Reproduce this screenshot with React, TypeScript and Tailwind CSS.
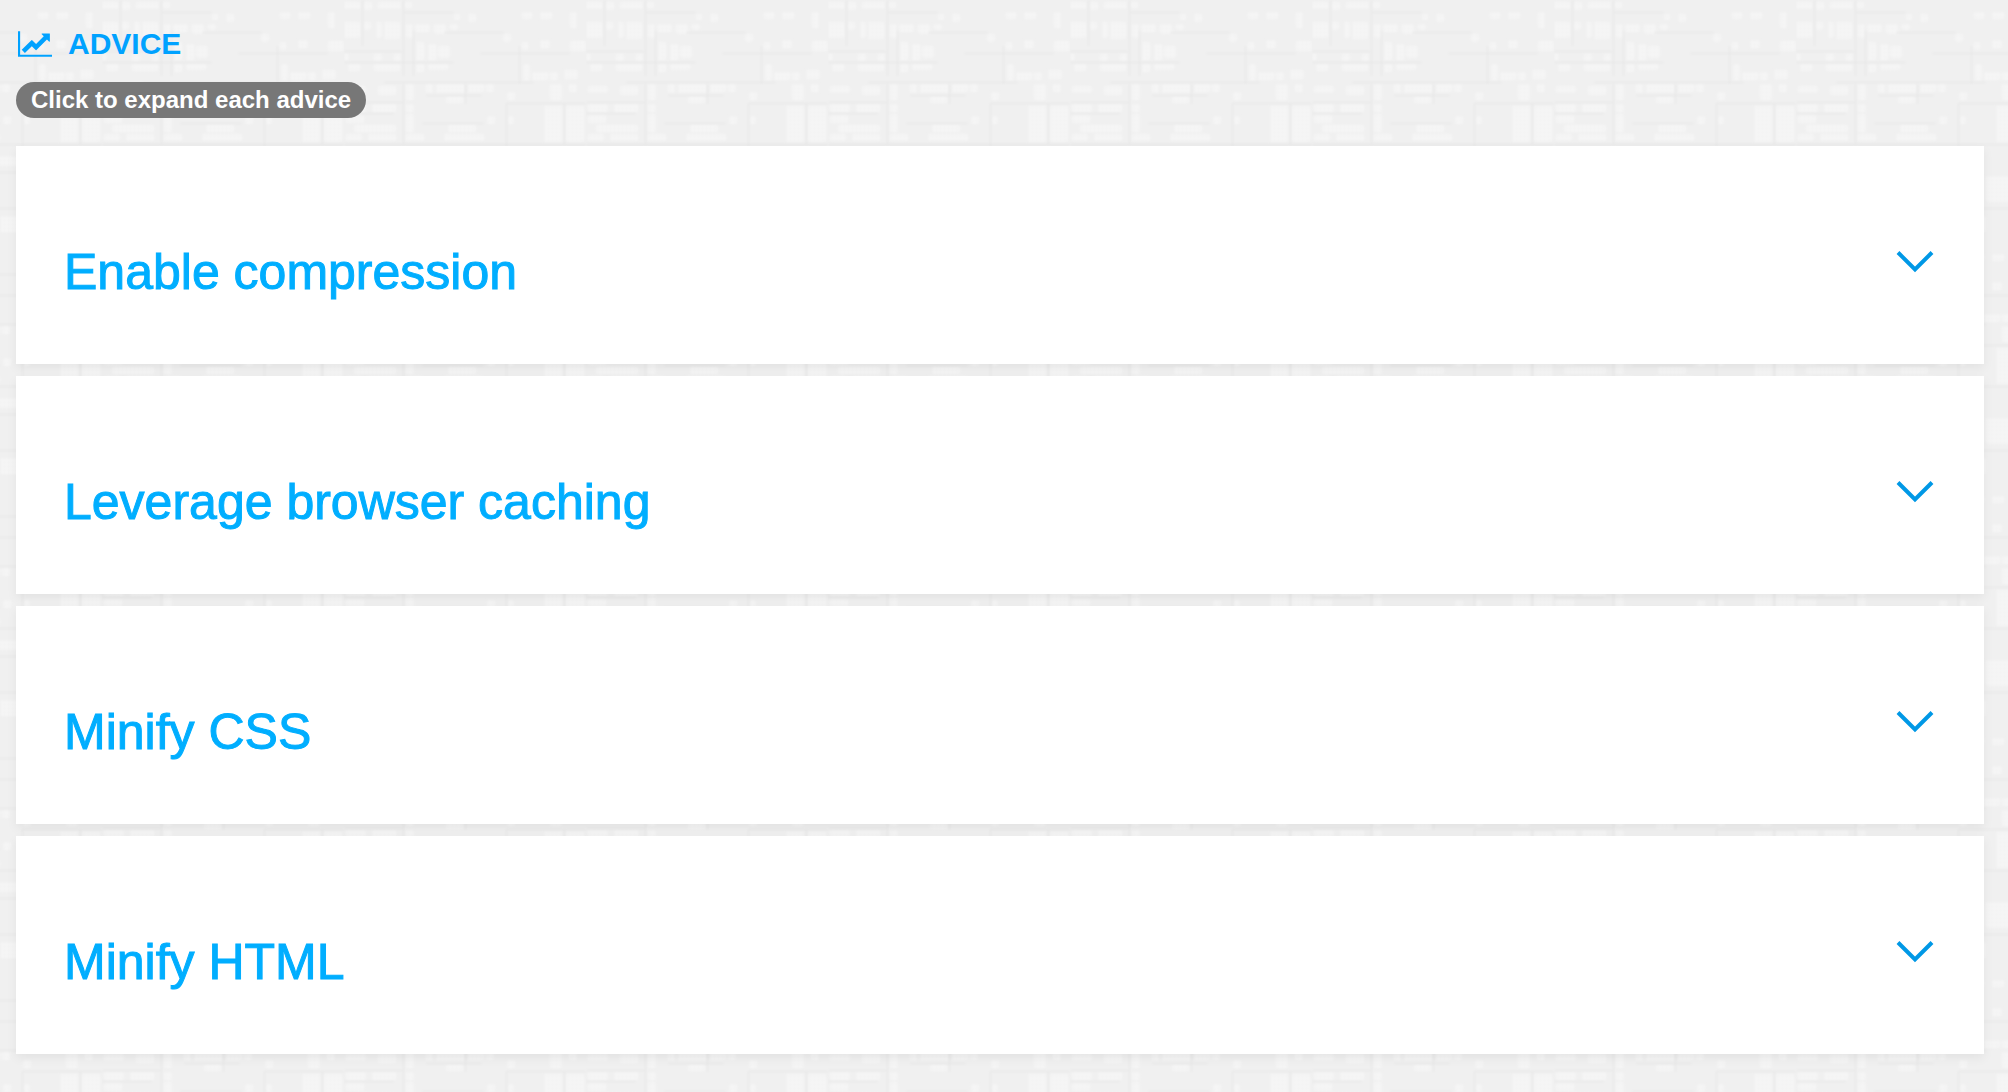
import { useState } from 'react'

interface Advice {
  id: string
  title: string
  text: string
}

interface Patch {
  x: number
  y: number
  w: number
  h: number
}

const advices: Advice[] = [
  {
    id: 'compression',
    title: 'Enable compression',
    text: 'Compress resources with gzip or deflate to reduce the number of bytes sent over the network.',
  },
  {
    id: 'caching',
    title: 'Leverage browser caching',
    text: 'Set an expiry date in the HTTP headers so the browser can load static resources from disk.',
  },
  {
    id: 'css',
    title: 'Minify CSS',
    text: 'Compact the CSS code to save bytes and speed up download and parse times.',
  },
  {
    id: 'html',
    title: 'Minify HTML',
    text: 'Compact the HTML code, including inline scripts and styles, to speed up download and parse times.',
  },
]

// light woven patches of the linen tile
const patches: Patch[] = [
  { x: 0, y: 2, w: 16, h: 7 },
  { x: 20, y: 2, w: 8, h: 8 },
  { x: 34, y: 2, w: 23, h: 7 },
  { x: 61, y: 2, w: 7, h: 6 },
  { x: 0, y: 22, w: 16, h: 16 },
  { x: 20, y: 22, w: 7, h: 8 },
  { x: 32, y: 22, w: 6, h: 16 },
  { x: 40, y: 22, w: 16, h: 17 },
  { x: 62, y: 24, w: 7, h: 14 },
  { x: 71, y: 24, w: 15, h: 8 },
  { x: 90, y: 24, w: 12, h: 10 },
  { x: 106, y: 24, w: 8, h: 6 },
  { x: 72, y: 42, w: 8, h: 18 },
  { x: 84, y: 44, w: 8, h: 16 },
  { x: 94, y: 46, w: 12, h: 12 },
  { x: 110, y: 14, w: 6, h: 6 },
  { x: 124, y: 14, w: 8, h: 8 },
  { x: 0, y: 54, w: 5, h: 6 },
  { x: 30, y: 54, w: 8, h: 7 },
  { x: 50, y: 54, w: 7, h: 7 },
  { x: 4, y: 64, w: 12, h: 7 },
  { x: 30, y: 64, w: 26, h: 7 },
  { x: 72, y: 64, w: 8, h: 8 },
  { x: 84, y: 64, w: 20, h: 6 },
  { x: 178, y: 12, w: 10, h: 7 },
  { x: 196, y: 12, w: 12, h: 7 },
  { x: 226, y: 12, w: 7, h: 16 },
  { x: 159, y: 34, w: 8, h: 8 },
  { x: 178, y: 42, w: 6, h: 8 },
  { x: 196, y: 40, w: 10, h: 8 },
  { x: 226, y: 41, w: 16, h: 10 },
  { x: 179, y: 64, w: 7, h: 16 },
  { x: 188, y: 72, w: 16, h: 8 },
  { x: 206, y: 72, w: 8, h: 8 },
  { x: 220, y: 70, w: 14, h: 9 },
  { x: 2, y: 86, w: 20, h: 7 },
  { x: 34, y: 86, w: 18, h: 9 },
  { x: 62, y: 84, w: 8, h: 16 },
  { x: 62, y: 104, w: 8, h: 8 },
  { x: 62, y: 114, w: 8, h: 18 },
  { x: 82, y: 84, w: 7, h: 9 },
  { x: 92, y: 84, w: 28, h: 9 },
  { x: 124, y: 84, w: 16, h: 8 },
  { x: 142, y: 84, w: 8, h: 8 },
  { x: 102, y: 97, w: 17, h: 6 },
  { x: 163, y: 92, w: 8, h: 8 },
  { x: 206, y: 84, w: 12, h: 16 },
  { x: 225, y: 84, w: 8, h: 8 },
  { x: 2, y: 104, w: 20, h: 8 },
  { x: 28, y: 104, w: 24, h: 8 },
  { x: 143, y: 116, w: 8, h: 8 },
  { x: 164, y: 116, w: 6, h: 8 },
  { x: 200, y: 106, w: 18, h: 36 },
  { x: 222, y: 106, w: 18, h: 36 },
  { x: 2, y: 115, w: 18, h: 8 },
  { x: 10, y: 125, w: 42, h: 7 },
  { x: 104, y: 125, w: 28, h: 7 },
  { x: 2, y: 134, w: 16, h: 7 },
  { x: 24, y: 134, w: 28, h: 7 },
  { x: 62, y: 134, w: 18, h: 7 },
  { x: 100, y: 134, w: 40, h: 7 },
  { x: 20, y: 150, w: 34, h: 14 },
  { x: 110, y: 156, w: 70, h: 10 },
  { x: 6, y: 184, w: 20, h: 30 },
  { x: 84, y: 190, w: 50, h: 14 },
  { x: 190, y: 176, w: 40, h: 26 },
  { x: 40, y: 222, w: 60, h: 12 },
  { x: 140, y: 216, w: 50, h: 16 },
]

// darker threads, thin rows and columns
const threads: Patch[] = [
  { x: 60, y: 12, w: 50, h: 1 },
  { x: 100, y: 32, w: 60, h: 1 },
  { x: 0, y: 51, w: 58, h: 1 },
  { x: 136, y: 53, w: 90, h: 1 },
  { x: 0, y: 62, w: 110, h: 1 },
  { x: 40, y: 82, w: 150, h: 1 },
  { x: 82, y: 95, w: 56, h: 1 },
  { x: 0, y: 102, w: 60, h: 1 },
  { x: 162, y: 103, w: 80, h: 1 },
  { x: 0, y: 113, w: 50, h: 1 },
  { x: 78, y: 123, w: 62, h: 1 },
  { x: 0, y: 144, w: 242, h: 1 },
  { x: 0, y: 172, w: 180, h: 1 },
  { x: 60, y: 208, w: 182, h: 1 },
  { x: 18, y: 0, w: 1, h: 46 },
  { x: 59, y: 0, w: 1, h: 76 },
  { x: 69, y: 30, w: 1, h: 46 },
  { x: 175, y: 46, w: 1, h: 38 },
  { x: 220, y: 104, w: 1, h: 40 },
  { x: 59, y: 84, w: 1, h: 60 },
  { x: 121, y: 84, w: 1, h: 20 },
  { x: 162, y: 104, w: 1, h: 80 },
]

function LinenBackground() {
  return (
    <svg className="absolute inset-0 -z-10 h-full w-full" aria-hidden="true">
      <defs>
        <filter id="soften" x="0" y="0" width="1" height="1">
          <feGaussianBlur stdDeviation="1" />
        </filter>
        <pattern id="weave" width="4" height="4" patternUnits="userSpaceOnUse">
          <rect width="4" height="4" fill="#f7f7f7" />
          <rect width="1" height="4" fill="#f2f2f2" />
          <rect width="4" height="1" fill="#f2f2f2" />
        </pattern>
        <pattern id="linen" x="102" width="242" height="242" patternUnits="userSpaceOnUse">
          <rect width="242" height="242" fill="#f0f0f0" />
          <g filter="url(#soften)">
            {patches.map((p, i) => (
              <rect key={i} x={p.x} y={p.y} width={p.w} height={p.h} rx="2" fill="url(#weave)" />
            ))}
            {threads.map((t, i) => (
              <rect key={i} x={t.x} y={t.y} width={t.w} height={t.h} fill="#e6e6e6" />
            ))}
          </g>
        </pattern>
      </defs>
      <rect width="100%" height="100%" fill="url(#linen)" />
    </svg>
  )
}

function LineChartIcon() {
  return (
    <svg className="h-[30px] w-[34px]" viewBox="0 0 2048 1792" fill="currentColor" aria-hidden="true">
      <path d="M2048 1536v128h-2048v-1536h128v1408h1920zm-128-1248v435q0 21-19.5 29.5t-35.5-7.5l-121-121-633 633q-10 10-23 10t-23-10l-233-233-416 416-192-192 585-585q10-10 23-10t23 10l233 233 464-464-121-121q-16-16-7.5-35.5t29.5-19.5h435q14 0 23 9t9 23z" />
    </svg>
  )
}

function Chevron({ open }: { open: boolean }) {
  return (
    <svg
      className={open ? 'mb-5 h-6 w-10 rotate-180 text-[#0098e6]' : 'mb-5 h-6 w-10 text-[#0098e6]'}
      viewBox="0 0 40 24"
      fill="none"
      stroke="currentColor"
      strokeWidth="4"
      aria-hidden="true"
    >
      <path d="M2 2.5l17 17 17-17" />
    </svg>
  )
}

export default function App() {
  const [openId, setOpenId] = useState<string | null>(null)

  return (
    <main className="relative isolate min-h-screen bg-[#f0f0f0] pt-6 pr-6 pb-9 pl-4 font-['Liberation_Sans',Arial,sans-serif]">
      <LinenBackground />

      <h2 className="flex items-center gap-4 pl-0.5 text-[30px] leading-10 font-bold text-[#00a2ff]">
        <LineChartIcon />
        ADVICE
      </h2>

      <span className="mt-[18px] block w-fit rounded-full bg-[#777777] px-[15px] text-2xl leading-9 font-bold text-white">
        Click to expand each advice
      </span>

      {/* Advice list */}
      <div className="mt-7 space-y-3">
        {advices.map(advice => {
          const open = openId === advice.id
          return (
            <section key={advice.id} className="bg-white shadow-[0_4px_10px_rgba(0,0,0,0.06)]">
              <h3>
                <button
                  type="button"
                  aria-expanded={open}
                  onClick={() => setOpenId(open ? null : advice.id)}
                  className="flex w-full cursor-pointer items-center justify-between px-12 pt-24 pb-[62px] text-left text-[50px] leading-[60px] text-[#00aeff] [-webkit-text-stroke:1px]"
                >
                  {advice.title}
                  <Chevron open={open} />
                </button>
              </h3>
              {open && <p className="px-12 pb-12 text-2xl text-gray-600">{advice.text}</p>}
            </section>
          )
        })}
      </div>
    </main>
  )
}
